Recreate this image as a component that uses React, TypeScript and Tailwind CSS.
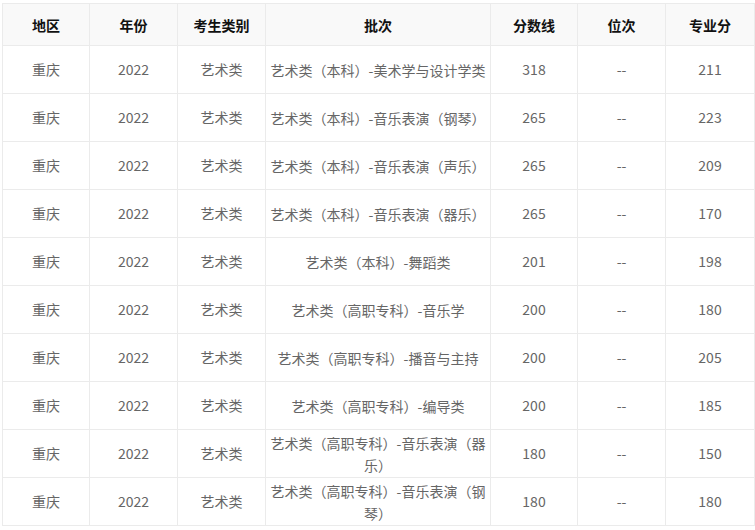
const rows: [string, string, string, string][] = [
  ['艺术类（本科）-美术学与设计学类', '318', '--', '211'],
  ['艺术类（本科）-音乐表演（钢琴）', '265', '--', '223'],
  ['艺术类（本科）-音乐表演（声乐）', '265', '--', '209'],
  ['艺术类（本科）-音乐表演（器乐）', '265', '--', '170'],
  ['艺术类（本科）-舞蹈类', '201', '--', '198'],
  ['艺术类（高职专科）-音乐学', '200', '--', '180'],
  ['艺术类（高职专科）-播音与主持', '200', '--', '205'],
  ['艺术类（高职专科）-编导类', '200', '--', '185'],
  ['艺术类（高职专科）-音乐表演（器乐）', '180', '--', '150'],
  ['艺术类（高职专科）-音乐表演（钢琴）', '180', '--', '180'],
];

const headers = ['地区', '年份', '考生类别', '批次', '分数线', '位次', '专业分'];
const widths = ['w-[87px]', 'w-[88px]', 'w-[88px]', 'w-[225px]', 'w-[87px]', 'w-[88px]', 'w-[89px]'];

export default function App() {
  return (
    <div className="bg-white w-[755px] h-[530px] pt-[3px] pl-[2px] font-['Microsoft_YaHei','Noto_Sans_CJK_SC',sans-serif] text-[14px]">
      <table className="table-fixed border-collapse w-[753px]">
        <colgroup>
          {widths.map((w, i) => (
            <col key={i} className={w} />
          ))}
        </colgroup>
        <thead>
          <tr className="bg-[#f9f9f9] h-[42px]">
            {headers.map((h) => (
              <th key={h} className="border border-[#ebebeb] font-bold text-[#111] text-center align-middle p-0 leading-[20px]">
                {h}
              </th>
            ))}
          </tr>
        </thead>
        <tbody>
          {rows.map((r, i) => (
            <tr key={i} className="h-[48px] text-[#666]">
              <td className="border border-[#ebebeb] text-center p-0">重庆</td>
              <td className="border border-[#ebebeb] text-center p-0">2022</td>
              <td className="border border-[#ebebeb] text-center p-0">艺术类</td>
              <td className="border border-[#ebebeb] text-center px-[4px] py-0 leading-[22px]">{r[0]}</td>
              <td className="border border-[#ebebeb] text-center p-0">{r[1]}</td>
              <td className="border border-[#ebebeb] text-center p-0">{r[2]}</td>
              <td className="border border-[#ebebeb] text-center p-0">{r[3]}</td>
            </tr>
          ))}
        </tbody>
      </table>
    </div>
  );
}
